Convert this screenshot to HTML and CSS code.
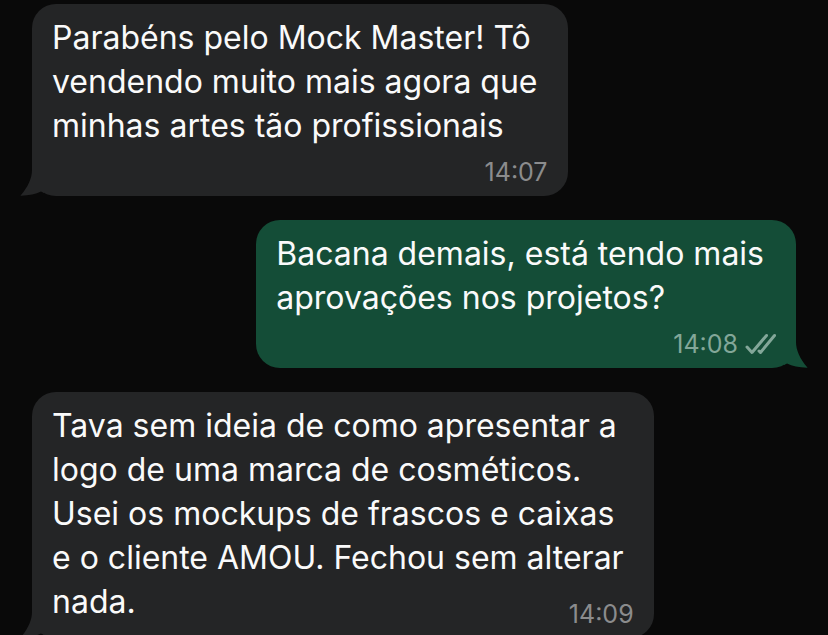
FILE: index.html
```html
<!DOCTYPE html>
<html lang="pt-BR">
<head>
    <meta charset="utf-8">
    <meta name="viewport" content="width=device-width, initial-scale=1">
    <title>Conversa</title>
    <link rel="stylesheet" href="styles.css">
</head>
<body>
    <main class="chat">
        <div class="msg in">
            <p>Parabéns pelo Mock Master! Tô<br>vendendo muito mais agora que<br>minhas artes tão profissionais</p>
            <div class="meta"><time>14:07</time></div>
            <svg class="tail" width="24" height="32" viewBox="0 0 24 32" aria-hidden="true"><path d="M12 0V6C12 14 8 23 1 31Q0 31.7 1 31.7C9 31.5 16 30 21 27.5L24 29V0Z"/></svg>
        </div>
        <div class="msg out">
            <p>Bacana demais, está tendo mais<br>aprovações nos projetos?</p>
            <div class="meta">
                <time>14:08</time>
                <svg class="ticks" width="32" height="24" viewBox="0 0 32 24" role="img" aria-label="Entregue"><path d="M3 15L8 20.5L22.500 3.500M15 19L16.500 20.500L30.500 3.500"/></svg>
            </div>
            <svg class="tail" width="24" height="32" viewBox="0 0 24 32" aria-hidden="true"><path d="M12 0V6C12 14 8 23 1 31Q0 31.7 1 31.7C9 31.5 16 30 21 27.5L24 29V0Z"/></svg>
        </div>
        <div class="msg in inline">
            <p>Tava sem ideia de como apresentar a<br>logo de uma marca de cosméticos.<br>Usei os mockups de frascos e caixas<br>e o cliente AMOU. Fechou sem alterar<br>nada.</p>
            <div class="meta"><time>14:09</time></div>
            <svg class="tail" width="24" height="32" viewBox="0 0 24 32" aria-hidden="true"><path d="M12 0V6C12 14 8 23 1 31Q0 31.7 1 31.7C9 31.5 16 30 21 27.5L24 29V0Z"/></svg>
        </div>
    </main>
</body>
</html>
```
FILE: styles.css
```css
* { box-sizing: border-box; }
body { margin: 0; background: #090909; font-family: Inter, "Liberation Sans", sans-serif; }
.chat { display: flex; flex-direction: column; align-items: flex-start; gap: 24px; height: 100vh; padding: 4px 32px 0; overflow: hidden; }

.msg { display: grid; flex: none; position: relative; padding: 12px 20px 10px; border-radius: 24px; color: #fafafa; }
.msg p { margin: 0; padding-right: 10px; font-size: 32px; line-height: 44px; white-space: nowrap; }
.in { background: #242526; }
.out { align-self: flex-end; background: #144d37; }
.out p { padding-right: 12px; }

.meta { display: flex; justify-self: end; align-items: center; gap: 6px; margin-top: 10px; font-size: 25px; line-height: 28px; color: #8b8c8d; }
.out .meta { color: #83a799; }
.ticks { fill: none; stroke: currentColor; stroke-width: 3; stroke-linecap: round; stroke-linejoin: round; }

/* time sits beside the last line */
.inline p, .inline .meta { grid-area: 1 / 1; }
.inline p { padding-bottom: 4px; }
.inline .meta { align-self: end; }

.tail { position: absolute; bottom: 0; left: -12px; fill: #242526; }
.out .tail { left: auto; right: -12px; fill: #144d37; transform: scaleX(-1); }
```
